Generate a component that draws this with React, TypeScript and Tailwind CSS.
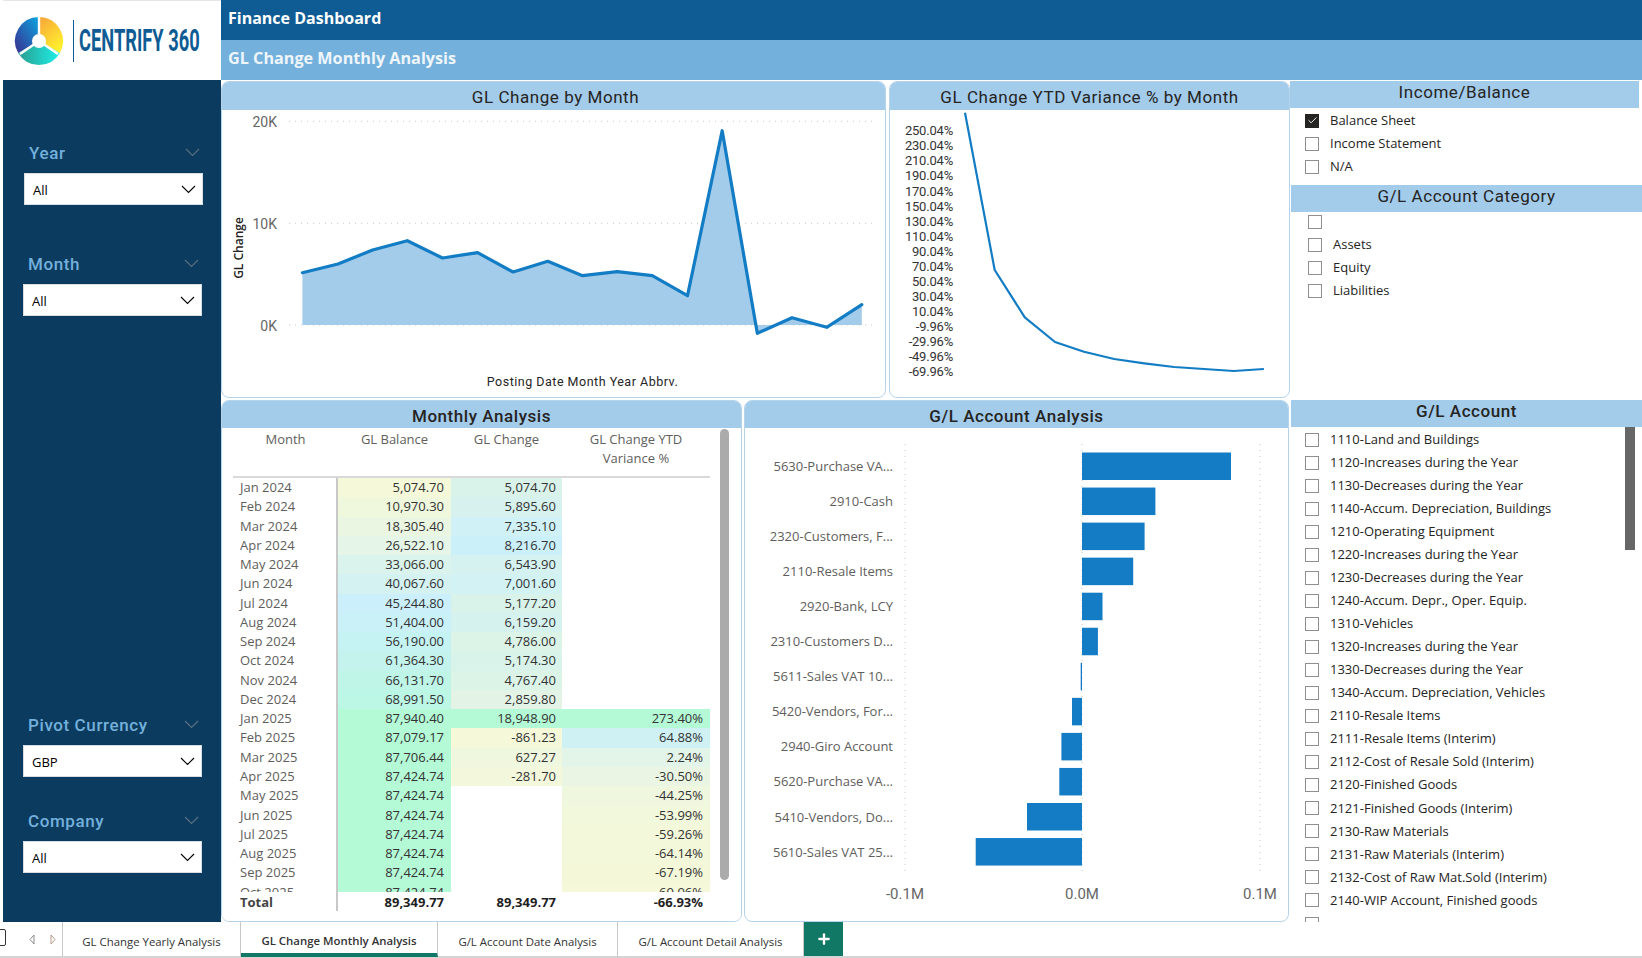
import { Check, Plus } from "lucide-react";

const sans = "font-['Open_Sans',sans-serif]";
const din = "font-['Roboto',sans-serif]";

const changePoints: [number, number][] = [
  [302.4, 272.7], [338, 264], [372.6, 250], [407.3, 240.7], [442.5, 258], [477.6, 252.7],
  [513.1, 272], [547.8, 261.3], [582.5, 275.7], [617.2, 271.7], [652.3, 275.7], [687.5, 295.7],
  [722.2, 130.7], [757.3, 333.3], [792, 317.7], [826.7, 327.3], [861.8, 304.7],
];

const variancePoints = "965,112.7 994.7,270 1024.8,317.3 1055,342 1084,351.7 1114.2,359 1144.3,363.3 1174,367 1204,369 1233.7,371 1263.9,369";

const varianceTicks = [
  "250.04%", "230.04%", "210.04%", "190.04%", "170.04%", "150.04%", "130.04%", "110.04%", "90.04%",
  "70.04%", "50.04%", "30.04%", "10.04%", "-9.96%", "-29.96%", "-49.96%", "-69.96%",
];

const rows = [
  { m: "Jan 2024", b: "5,074.70", bc: "bg-[#f5f8d9]", c: "5,074.70", cc: "bg-[#d9f2ea]", v: "", vc: "" },
  { m: "Feb 2024", b: "10,970.30", bc: "bg-[#eff8dd]", c: "5,895.60", cc: "bg-[#d7f2ee]", v: "", vc: "" },
  { m: "Mar 2024", b: "18,305.40", bc: "bg-[#eaf6e2]", c: "7,335.10", cc: "bg-[#d0f1f6]", v: "", vc: "" },
  { m: "Apr 2024", b: "26,522.10", bc: "bg-[#e5f5e7]", c: "8,216.70", cc: "bg-[#cbf0fa]", v: "", vc: "" },
  { m: "May 2024", b: "33,066.00", bc: "bg-[#daf3ec]", c: "6,543.90", cc: "bg-[#d5f2f0]", v: "", vc: "" },
  { m: "Jun 2024", b: "40,067.60", bc: "bg-[#d4f2f1]", c: "7,001.60", cc: "bg-[#d2f2f4]", v: "", vc: "" },
  { m: "Jul 2024", b: "45,244.80", bc: "bg-[#cbf0fb]", c: "5,177.20", cc: "bg-[#d9f3ea]", v: "", vc: "" },
  { m: "Aug 2024", b: "51,404.00", bc: "bg-[#c9f1f7]", c: "6,159.20", cc: "bg-[#d6f2ef]", v: "", vc: "" },
  { m: "Sep 2024", b: "56,190.00", bc: "bg-[#c5f2f2]", c: "4,786.00", cc: "bg-[#dcf3e8]", v: "", vc: "" },
  { m: "Oct 2024", b: "61,364.30", bc: "bg-[#c3f3ec]", c: "5,174.30", cc: "bg-[#d9f3ea]", v: "", vc: "" },
  { m: "Nov 2024", b: "66,131.70", bc: "bg-[#bef5e7]", c: "4,767.40", cc: "bg-[#dcf3e8]", v: "", vc: "" },
  { m: "Dec 2024", b: "68,991.50", bc: "bg-[#bcf6e5]", c: "2,859.80", cc: "bg-[#e3f4e6]", v: "", vc: "" },
  { m: "Jan 2025", b: "87,940.40", bc: "bg-[#b5fad6]", c: "18,948.90", cc: "bg-[#b5fad6]", v: "273.40%", vc: "bg-[#b5fad6]" },
  { m: "Feb 2025", b: "87,079.17", bc: "bg-[#b5fad6]", c: "-861.23", cc: "bg-[#f5f8d9]", v: "64.88%", vc: "bg-[#cff1f4]" },
  { m: "Mar 2025", b: "87,706.44", bc: "bg-[#b5fad6]", c: "627.27", cc: "bg-[#eff7df]", v: "2.24%", vc: "bg-[#e3f4e8]" },
  { m: "Apr 2025", b: "87,424.74", bc: "bg-[#b5fad6]", c: "-281.70", cc: "bg-[#f3f7dc]", v: "-30.50%", vc: "bg-[#eaf6e3]" },
  { m: "May 2025", b: "87,424.74", bc: "bg-[#b5fad6]", c: "", cc: "", v: "-44.25%", vc: "bg-[#eff7df]" },
  { m: "Jun 2025", b: "87,424.74", bc: "bg-[#b5fad6]", c: "", cc: "", v: "-53.99%", vc: "bg-[#f1f8dc]" },
  { m: "Jul 2025", b: "87,424.74", bc: "bg-[#b5fad6]", c: "", cc: "", v: "-59.26%", vc: "bg-[#f3f8db]" },
  { m: "Aug 2025", b: "87,424.74", bc: "bg-[#b5fad6]", c: "", cc: "", v: "-64.14%", vc: "bg-[#f4f8da]" },
  { m: "Sep 2025", b: "87,424.74", bc: "bg-[#b5fad6]", c: "", cc: "", v: "-67.19%", vc: "bg-[#f4f8d9]" },
  { m: "Oct 2025", b: "87,424.74", bc: "bg-[#b5fad6]", c: "", cc: "", v: "-69.96%", vc: "bg-[#f5f8d9]" },
];

const bars = [
  { label: "5630-Purchase VA...", from: 1082, to: 1231 },
  { label: "2910-Cash", from: 1082, to: 1155.4 },
  { label: "2320-Customers, F...", from: 1082, to: 1144.6 },
  { label: "2110-Resale Items", from: 1082, to: 1133.2 },
  { label: "2920-Bank, LCY", from: 1082, to: 1102.5 },
  { label: "2310-Customers D...", from: 1082, to: 1097.9 },
  { label: "5611-Sales VAT 10...", from: 1080.7, to: 1082 },
  { label: "5420-Vendors, For...", from: 1072, to: 1082 },
  { label: "2940-Giro Account", from: 1061.4, to: 1082 },
  { label: "5620-Purchase VA...", from: 1059.3, to: 1082 },
  { label: "5410-Vendors, Do...", from: 1027, to: 1082 },
  { label: "5610-Sales VAT 25...", from: 975.7, to: 1082 },
];

const accounts = [
  "1110-Land and Buildings", "1120-Increases during the Year", "1130-Decreases during the Year",
  "1140-Accum. Depreciation, Buildings", "1210-Operating Equipment", "1220-Increases during the Year",
  "1230-Decreases during the Year", "1240-Accum. Depr., Oper. Equip.", "1310-Vehicles",
  "1320-Increases during the Year", "1330-Decreases during the Year", "1340-Accum. Depreciation, Vehicles",
  "2110-Resale Items", "2111-Resale Items (Interim)", "2112-Cost of Resale Sold (Interim)", "2120-Finished Goods",
  "2121-Finished Goods (Interim)", "2130-Raw Materials", "2131-Raw Materials (Interim)",
  "2132-Cost of Raw Mat.Sold (Interim)", "2140-WIP Account, Finished goods", "",
];

const tabs = [
  { name: "GL Change Yearly Analysis", w: "w-[178px]", active: false },
  { name: "GL Change Monthly Analysis", w: "w-[197px]", active: true },
  { name: "G/L Account Date Analysis", w: "w-[180px]", active: false },
  { name: "G/L Account Detail Analysis", w: "w-[186px]", active: false },
];

function Chevron({ className }: { className: string }) {
  return (
    <svg width="15" height="9" viewBox="0 0 15 9" fill="none" className={className}>
      <polyline points="1,1 7.5,7.5 14,1" stroke="currentColor" strokeWidth="1.1" />
    </svg>
  );
}

function Slicer({ label, value, className }: { label: string; value: string; className: string }) {
  return (
    <div className={`w-[179px] ${className}`}>
      <div className="flex items-center justify-between h-[24px] pl-[5px] pr-[3px]">
        <span className={`${din} text-[17px] font-medium tracking-[0.6px] text-[#74b0dc]`}>{label}</span>
        <Chevron className="text-[#5c6f80] -mt-[4px]" />
      </div>
      <div className={`${sans} mt-[7px] h-[32px] bg-white border border-[#d8dde2] flex items-center justify-between pl-[8px] pr-[6px] text-[13px] text-black`}>
        <span className="pt-[4px]">{value}</span>
        <Chevron className="text-black" />
      </div>
    </div>
  );
}

function Logo() {
  return (
    <div className="h-[80px] bg-white flex items-center border-t border-[#e6e6e6] overflow-hidden">
      <svg width="50" height="50" viewBox="0 0 50 50" className="ml-[11px] shrink-0">
        <defs>
          <linearGradient id="seg-blue" x1="0" y1="1" x2="1" y2="0">
            <stop offset="0" stopColor="#3b2f8f" />
            <stop offset="1" stopColor="#0ba5e0" />
          </linearGradient>
          <linearGradient id="seg-gold" x1="0" y1="0" x2="0.6" y2="1">
            <stop offset="0" stopColor="#f7a23b" />
            <stop offset="1" stopColor="#fff02e" />
          </linearGradient>
          <linearGradient id="seg-teal" x1="0" y1="0" x2="1" y2="0">
            <stop offset="0" stopColor="#2a9d8f" />
            <stop offset="1" stopColor="#1ef0ea" />
          </linearGradient>
        </defs>
        <path d="M25 1 A24 24 0 0 0 4.2 37 L25 25 Z" fill="url(#seg-blue)" />
        <path d="M25 1 A24 24 0 0 1 45.8 37 L25 25 Z" fill="url(#seg-gold)" />
        <path d="M4.2 37 A24 24 0 0 0 45.8 37 L25 25 Z" fill="url(#seg-teal)" />
        <path d="M25 1 L25 25 M6 38 L25 25 M44 38 L25 25" stroke="#fff" strokeWidth="2.4" />
        <circle cx="25" cy="25" r="7" fill="#fff" />
      </svg>
      <div className="ml-[9px] w-px h-[42px] bg-[#0f5c94] shrink-0" />
      <span className={`${din} ml-[5px] pt-[1px] origin-left scale-x-[0.59] whitespace-nowrap text-[31px] font-bold text-[#0f5c94]`}>
        CENTRIFY 360
      </span>
    </div>
  );
}

function TitleBand({ title, className }: { title: string; className?: string }) {
  return (
    <div className={`${din} shrink-0 bg-[#a3cbea] flex items-center justify-center text-[17px] tracking-[0.55px] text-[#252423] ${className ?? ""}`}>
      {title}
    </div>
  );
}

function ChangeChart() {
  const line = changePoints.map((p) => p.join(",")).join(" ");
  const area = `302.4,325 ${line} 861.8,325`;
  return (
    <svg viewBox="222 110 663 287" className="block w-[663px] h-[287px]">
      {[121.3, 223.3, 325].map((y) => (
        <line key={y} x1="289" x2="873" y1={y} y2={y} stroke="#c8c8c8" strokeDasharray="1 5" />
      ))}
      <polygon points={area} fill="#a3cbea" />
      <polyline points={line} fill="none" stroke="#127cc4" strokeWidth="3.2" strokeLinejoin="round" strokeLinecap="round" />
      <g className={din} fontSize="14" fill="#666" textAnchor="end">
        <text x="277" y="126.5">20K</text>
        <text x="277" y="228.5">10K</text>
        <text x="277" y="330.5">0K</text>
      </g>
      <text x="0" y="0" transform="translate(242.5 248) rotate(-90)" textAnchor="middle" fontSize="12" fontWeight="600" fill="#252423" className={sans}>GL Change</text>
      <text x="582.5" y="386" textAnchor="middle" fontSize="12.5" letterSpacing="0.5" fill="#252423" className={din}>Posting Date Month Year Abbrv.</text>
    </svg>
  );
}

function VarianceChart() {
  return (
    <svg viewBox="890 110 399 287" className="block w-[399px] h-[287px]">
      <g className={din} fontSize="13" fill="#333" textAnchor="end" letterSpacing="-0.2">
        {varianceTicks.map((t, i) => (
          <text key={t} x="953" y={135.3 + i * 15.06}>{t}</text>
        ))}
      </g>
      <polyline points={variancePoints} fill="none" stroke="#127cc4" strokeWidth="2.2" strokeLinejoin="round" />
    </svg>
  );
}

function AccountChart() {
  return (
    <svg viewBox="745 428 543 492" className="block w-[543px] h-[492px]">
      {[905, 1082, 1260].map((x) => (
        <line key={x} x1={x} x2={x} y1="444" y2="872" stroke="#c8c8c8" strokeDasharray="1 5" />
      ))}
      {bars.map((b, i) => (
        <g key={b.label}>
          <rect x={b.from} y={452.5 + i * 35.05} width={b.to - b.from} height="27.5" fill="#147bc5" />
          <text x="893" y={471 + i * 35.05} textAnchor="end" fontSize="13" fill="#605e5c" className={sans}>{b.label}</text>
        </g>
      ))}
      <g className={din} fontSize="15" fill="#666" textAnchor="middle">
        <text x="905" y="899">-0.1M</text>
        <text x="1082" y="899">0.0M</text>
        <text x="1260" y="899">0.1M</text>
      </g>
    </svg>
  );
}

function CheckItem({ label, checked, className }: { label: string; checked?: boolean; className?: string }) {
  return (
    <div className={`flex items-center h-[23.05px] ${className ?? ""}`}>
      {checked ? (
        <span className="w-[14px] h-[14px] shrink-0 bg-[#252423] flex items-center justify-center text-white">
          <Check size={11} strokeWidth={2} />
        </span>
      ) : (
        <span className="w-[14px] h-[14px] shrink-0 border border-[#8f8f8f] bg-white" />
      )}
      <span className="ml-[11px] whitespace-nowrap text-[13px] text-[#252423]">{label}</span>
    </div>
  );
}

function MonthlyTable() {
  return (
    <div className={`${sans} relative flex-1 bg-white text-[13px] text-[#333]`}>
      <div className="ml-[11px] w-[477px] h-[50px] border-b-2 border-[#d9d9d9] flex text-center text-[#605e5c] leading-[19px] pt-[2px]">
        <div className="w-[105px]">Month</div>
        <div className="w-[113px]">GL Balance</div>
        <div className="w-[111px]">GL Change</div>
        <div className="w-[148px]">GL Change YTD<br />Variance %</div>
      </div>
      <div className="ml-[11px] w-[477px] h-[414px] overflow-hidden">
        {rows.map((r) => (
          <div key={r.m} className="flex h-[19.27px] leading-[19px]">
            <div className="w-[105px] pl-[7px] border-r-2 border-[#c8c8c8] text-[#605e5c]">{r.m}</div>
            <div className={`w-[113px] pr-[7px] text-right ${r.bc}`}>{r.b}</div>
            <div className={`w-[111px] pr-[6px] text-right ${r.cc}`}>{r.c}</div>
            <div className={`w-[148px] pr-[7px] text-right ${r.vc}`}>{r.v}</div>
          </div>
        ))}
      </div>
      <div className="ml-[11px] w-[477px] h-[19px] flex leading-[21px] font-bold text-[#1f1f1f]">
        <div className="w-[105px] pl-[7px] border-r-2 border-[#c8c8c8] text-[#444]">Total</div>
        <div className="w-[113px] pr-[7px] text-right">89,349.77</div>
        <div className="w-[111px] pr-[6px] text-right">89,349.77</div>
        <div className="w-[148px] pr-[7px] text-right">-66.93%</div>
      </div>
      <div className="absolute left-[498px] top-[1px] w-[9px] h-[451px] rounded-full bg-[#ababab]" />
    </div>
  );
}

export default function App() {
  return (
    <div className={`${sans} w-[1642px] h-[958px] overflow-hidden bg-white flex flex-col`}>
      <div className="flex h-[922px]">
        <aside className="w-[218px] ml-[3px] shrink-0 flex flex-col">
          <Logo />
          <div className="flex-1 bg-[#0b3c60] pl-[20px]">
            <Slicer label="Year" value="All" className="mt-[62px] ml-[1px]" />
            <Slicer label="Month" value="All" className="mt-[48px]" />
            <Slicer label="Pivot Currency" value="GBP" className="mt-[398px]" />
            <Slicer label="Company" value="All" className="mt-[33px]" />
          </div>
        </aside>
        <main className="flex-1 min-w-0 flex flex-col">
          <div className="h-[40px] shrink-0 bg-[#0f5c94] flex items-center pl-[7px] pb-[4px] text-[16px] font-bold text-white">
            Finance Dashboard
          </div>
          <div className="h-[40px] shrink-0 bg-[#74b0dc] flex items-center pl-[7px] pb-[4px] text-[16.2px] font-bold text-[#eef6fb]">
            GL Change Monthly Analysis
          </div>
          <div className="h-[320px] shrink-0 flex pt-[1px]">
            <section className="w-[665px] h-[317px] mr-[3px] rounded-[8px] border border-[#b5d3ea] overflow-hidden flex flex-col">
              <TitleBand title="GL Change by Month" className="h-[28px] pt-[3px] pl-[4px]" />
              <ChangeChart />
            </section>
            <section className="w-[401px] h-[317px] rounded-[8px] border border-[#b5d3ea] overflow-hidden flex flex-col">
              <TitleBand title="GL Change YTD Variance % by Month" className="h-[28px] pt-[3px]" />
              <VarianceChart />
            </section>
            <div className="flex-1 min-w-0">
              <TitleBand title="Income/Balance" className="h-[27px] mr-[3px] pb-[4px]" />
              <div className="pl-[15px] pt-[1px]">
                <CheckItem label="Balance Sheet" checked />
                <CheckItem label="Income Statement" />
                <CheckItem label="N/A" />
              </div>
              <TitleBand title="G/L Account Category" className="h-[27px] mt-[7px] ml-[1px] pb-[4px]" />
              <div className="pl-[18px] -mt-[2px]">
                <CheckItem label="" />
                <CheckItem label="Assets" />
                <CheckItem label="Equity" />
                <CheckItem label="Liabilities" />
              </div>
            </div>
          </div>
          <div className="flex-1 min-h-0 flex">
            <section className="w-[521px] mr-[2px] rounded-[8px] border border-[#b5d3ea] overflow-hidden flex flex-col">
              <TitleBand title="Monthly Analysis" className="h-[27px] pt-[4px] font-medium tracking-[0.7px]" />
              <MonthlyTable />
            </section>
            <section className="w-[545px] rounded-[8px] border border-[#b5d3ea] overflow-hidden flex flex-col">
              <TitleBand title="G/L Account Analysis" className="h-[27px] pt-[4px] font-medium" />
              <AccountChart />
            </section>
            <div className="relative flex-1 min-w-0 ml-[2px] flex flex-col">
              <TitleBand title="G/L Account" className="h-[27px] pb-[4px] font-medium" />
              <div className="flex-1 overflow-hidden pl-[14px] pt-[1px]">
                {accounts.map((a, i) => (
                  <CheckItem key={i} label={a} />
                ))}
              </div>
              <div className="absolute left-[334px] top-[27px] w-[10px] h-[123px] bg-[#666]" />
            </div>
          </div>
        </main>
      </div>
      <nav className="h-[36px] shrink-0 flex border-b-2 border-[#d4d4d4] text-[11.4px] text-[#333]">
        <div className="w-[63px] shrink-0 border-r border-[#c8c8c8] relative">
          <span className="absolute -left-[7px] top-[7px] w-[13px] h-[17px] rounded-[2px] border border-[#333]" />
          <svg width="6" height="11" viewBox="0 0 6 11" fill="none" className="absolute left-[29px] top-[12px]">
            <polygon points="5,1 1,5.5 5,10" stroke="#8a8a8a" />
          </svg>
          <svg width="6" height="11" viewBox="0 0 6 11" fill="none" className="absolute left-[50px] top-[12px]">
            <polygon points="1,1 5,5.5 1,10" stroke="#b89a8c" />
          </svg>
        </div>
        {tabs.map((t) => (
          <div
            key={t.name}
            className={`${t.w} shrink-0 -mb-px flex items-center justify-center border-r border-[#c8c8c8] whitespace-nowrap ${t.active ? "border-b-4 border-b-[#117865] font-semibold pt-[7px]" : "pt-[4px]"}`}
          >
            {t.name}
          </div>
        ))}
        <div className="w-[39px] shrink-0 bg-[#117865] flex items-center justify-center text-white">
          <Plus size={16} strokeWidth={3.5} />
        </div>
      </nav>
    </div>
  );
}
